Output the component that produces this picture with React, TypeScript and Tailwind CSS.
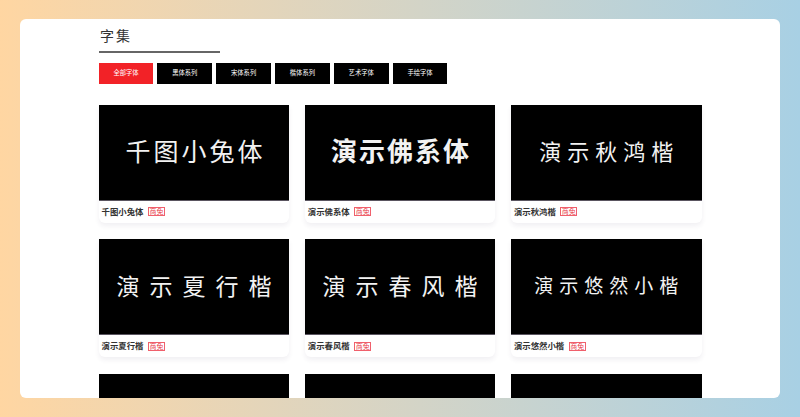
const tabs = ["全部字体", "黑体系列", "宋体系列", "楷体系列", "艺术字体", "手绘字体"];

type Font = { name: string; cls: string };

const fonts: Font[] = [
  { name: "千图小兔体", cls: "text-[25px] tracking-[3px] mr-[-3px] font-normal" },
  { name: "演示佛系体", cls: "text-[26px] tracking-[2px] mr-[-2px] font-bold" },
  { name: "演示秋鸿楷", cls: "text-[22px] tracking-[6px] mr-[-6px] font-normal" },
  { name: "演示夏行楷", cls: "text-[23px] tracking-[10px] mr-[-10px] font-normal" },
  { name: "演示春风楷", cls: "text-[23px] tracking-[10px] mr-[-10px] font-normal" },
  { name: "演示悠然小楷", cls: "text-[19px] tracking-[6px] mr-[-6px] font-normal" },
];

function Card({ font }: { font: Font }) {
  return (
    <div className="h-[118px] rounded-b-md bg-white shadow-[0_3px_5px_rgba(60,40,90,0.07)]">
      <div className="flex h-[96px] items-center justify-center border-b border-[#5a5560] bg-black">
        <span className={`whitespace-nowrap text-[#f2f2f2] ${font.cls}`}>{font.name}</span>
      </div>
      <div className="flex h-[22px] items-center pl-[3px]">
        <span className="text-[8.4px] font-bold leading-none text-[#333]">{font.name}</span>
        <span className="ml-[4.5px] flex h-[9px] w-[17px] items-center justify-center border border-[#f0606c] text-[7px] leading-none text-[#e8404c]">
          商免
        </span>
      </div>
    </div>
  );
}

export default function App() {
  return (
    <div
      className="h-[417px] w-[800px] overflow-hidden bg-gradient-to-r from-[#ffd6a2] to-[#a8d0e4] px-5 pt-[19px]"
      style={{ fontFamily: '"Liberation Sans", "Noto Sans CJK SC", sans-serif' }}
    >
      <div className="h-[379px] overflow-hidden rounded-md bg-white pl-[78.6px]">
        <div className="w-[121.5px] border-b-2 border-[#666] pb-[4.5px] pl-[1.5px] pt-[7px]">
          <h1 className="text-[14px] leading-[20px] tracking-[2px] text-[#333]">字集</h1>
        </div>
        <div className="mt-[10px] flex gap-[4px]">
          {tabs.map((t, i) => (
            <div
              key={t}
              className={`flex h-[21px] w-[54.8px] items-center justify-center text-[6.3px] text-white ${
                i === 0 ? "bg-[#f22227]" : "bg-black"
              }`}
            >
              {t}
            </div>
          ))}
        </div>
        <div className="mt-[21.3px] grid w-[603px] grid-cols-3 gap-x-[15.6px] gap-y-[16.5px]">
          {fonts.map((f) => (
            <Card key={f.name} font={f} />
          ))}
          <div className="h-[96px] bg-black" />
          <div className="h-[96px] bg-black" />
          <div className="h-[96px] bg-black" />
        </div>
      </div>
    </div>
  );
}
